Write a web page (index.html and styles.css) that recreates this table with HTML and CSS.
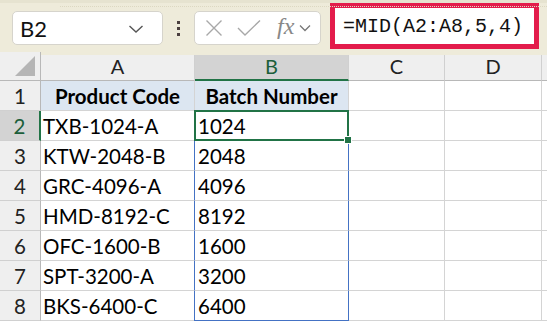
FILE: index.html
```html
<!DOCTYPE html>
<html>
<head>
<meta charset="utf-8">
<link rel="stylesheet" href="styles.css">
</head>
<body>
<div class="app">
  <div class="toolbar">
    <div class="namebox">
      <span class="nb-text">B2</span>
      <svg class="nb-chev" width="16" height="10" viewBox="0 0 16 10"><path d="M1.5 2 L8 8 L14.5 2" fill="none" stroke="#555" stroke-width="1.4"/></svg>
    </div>
    <div class="dots"><i></i><i></i><i></i></div>
    <div class="fxbox">
      <svg class="ic-x" width="18" height="18" viewBox="0 0 18 18"><path d="M1.5 1.5 L16.5 16.5 M16.5 1.5 L1.5 16.5" stroke="#a8a8a8" stroke-width="1.4" fill="none"/></svg>
      <svg class="ic-check" width="24" height="18" viewBox="0 0 24 18"><path d="M1 9 L8 16 L23 1.5" stroke="#a8a8a8" stroke-width="1.4" fill="none"/></svg>
      <span class="fx">fx</span>
      <svg class="ic-chev" width="12" height="8" viewBox="0 0 12 8"><path d="M1 1.5 L6 6.5 L11 1.5" fill="none" stroke="#777" stroke-width="1.3"/></svg>
    </div>
    <div class="formula">=MID(A2:A8,5,4)</div>
  </div>
  <div class="grid">
    <div class="ch corner"><span class="tri"></span></div>
    <div class="ch">A</div>
    <div class="ch sel">B</div>
    <div class="ch">C</div>
    <div class="ch">D</div>
    <div class="ch last"></div>

    <div class="rh">1</div>
    <div class="c hd">Product Code</div>
    <div class="c hd">Batch Number</div>
    <div class="c"></div><div class="c"></div><div class="c last"></div>

    <div class="rh sel">2</div>
    <div class="c">TXB-1024-A</div>
    <div class="c b active">1024<span class="handle"></span></div>
    <div class="c"></div><div class="c"></div><div class="c last"></div>

    <div class="rh">3</div>
    <div class="c">KTW-2048-B</div>
    <div class="c b">2048</div>
    <div class="c"></div><div class="c"></div><div class="c last"></div>

    <div class="rh">4</div>
    <div class="c">GRC-4096-A</div>
    <div class="c b">4096</div>
    <div class="c"></div><div class="c"></div><div class="c last"></div>

    <div class="rh">5</div>
    <div class="c">HMD-8192-C</div>
    <div class="c b">8192</div>
    <div class="c"></div><div class="c"></div><div class="c last"></div>

    <div class="rh">6</div>
    <div class="c">OFC-1600-B</div>
    <div class="c b">1600</div>
    <div class="c"></div><div class="c"></div><div class="c last"></div>

    <div class="rh">7</div>
    <div class="c">SPT-3200-A</div>
    <div class="c b">3200</div>
    <div class="c"></div><div class="c"></div><div class="c last"></div>

    <div class="rh">8</div>
    <div class="c">BKS-6400-C</div>
    <div class="c b bottom">6400</div>
    <div class="c"></div><div class="c"></div><div class="c last"></div>
  </div>
</div>
</body>
</html>
```
FILE: styles.css
```css
* { box-sizing: border-box; }
html, body { margin: 0; padding: 0; }
body { width: 547px; height: 326px; overflow: hidden; background: #fff; font-family: Lato, "Open Sans", sans-serif; }
.app { width: 547px; height: 326px; display: flex; flex-direction: column; }

.toolbar {
  height: 55px;
  background: #eeebda;
  border-top: 3px solid #e6e3d0;
  display: flex;
  align-items: flex-start;
  position: relative;
}
.toolbar::before {
  content: "";
  position: absolute; left: 60px; right: 0; top: 3px;
  border-top: 1px dotted #dcd8c2;
}
.namebox {
  margin: 8px 0 0 12px;
  width: 151px; height: 34px;
  background: #fff;
  border: 1px solid #d6d4cc;
  border-radius: 5px;
  display: flex; align-items: center;
  padding: 0 18px 0 7px;
}
.nb-text { font-size: 22px; color: #111; flex: 1; }
.nb-chev { margin-top: 1px; }
.dots {
  width: 31px; margin-top: 18px;
  display: flex; flex-direction: column; align-items: center; gap: 3px;
}
.dots i { display: block; width: 3px; height: 3px; background: #4a3f3f; }
.fxbox {
  margin-top: 8px;
  width: 127px; height: 34px;
  background: #fff;
  border: 1px solid #d6d4cc;
  border-radius: 5px;
  display: flex; align-items: center;
  padding-left: 10px;
}
.ic-x { margin-right: 14px; }
.ic-check { margin-right: 16px; }
.fx { font-family: "Liberation Serif", serif; font-style: italic; font-size: 24px; color: #888; margin-top: -3px; }
.ic-chev { margin-left: 5px; }
.formula {
  margin: 0 0 0 9px;
  width: 209px; height: 46px;
  background: #fff;
  border: 5px solid #e31c4b;
  font-family: "Liberation Mono", monospace;
  font-size: 20px;
  color: #111;
  padding: 7px 0 0 8px;
  white-space: nowrap;
}

.grid {
  display: grid;
  grid-template-columns: 41px 154px 154px 96px 97px 5px;
  grid-template-rows: 29px repeat(8, 30px);
  margin-top: -3px;
  font-size: 20.5px;
}
.ch {
  background: #efefef;
  border-right: 1px solid #d0d0d0;
  border-bottom: 1px solid #b8b8b8;
  display: flex; align-items: center; justify-content: center;
  color: #222;
  font-size: 20px;
}
.ch.sel { background: #d3d3d3; border-bottom: 2px solid #217346; color: #1b5e3a; }
.ch.last { border-right: none; }
.corner { position: relative; border-right: 1px solid #b8b8b8; }
.tri {
  position: absolute; right: 5px; bottom: 4px;
  width: 0; height: 0;
  border-left: 20px solid transparent;
  border-bottom: 20px solid #b5b5b5;
}
.rh {
  background: #efefef;
  border-right: 1px solid #b8b8b8;
  border-bottom: 1px solid #d0d0d0;
  display: flex; align-items: center; justify-content: center;
  color: #222;
}
.rh.sel { background: #d3d3d3; border-right: 2px solid #217346; color: #1b5e3a; }
.c {
  border-right: 1px solid #d4d4d4;
  border-bottom: 1px solid #d4d4d4;
  display: flex; align-items: center;
  padding: 0 0 0 2px;
  color: #000;
  white-space: nowrap;
  position: relative;
}
.c.last { border-right: none; }
.c.hd {
  background: #dce6f1;
  font-weight: bold;
  justify-content: center;
  padding: 0;
}
.c.b { border-left: 1px solid #4472c4; border-right: 1px solid #4472c4; margin-left: -1px; padding-left: 3px; }
.c.b.bottom { border-bottom: 1px solid #4472c4; }
.c.active { border: 2px solid #217346; margin-left: -1px; margin-top: -1px; padding-left: 2px; z-index: 2; }
.handle {
  position: absolute; right: -5px; bottom: -5px;
  width: 8px; height: 8px;
  background: #217346;
  border: 1px solid #fff;
}
```
